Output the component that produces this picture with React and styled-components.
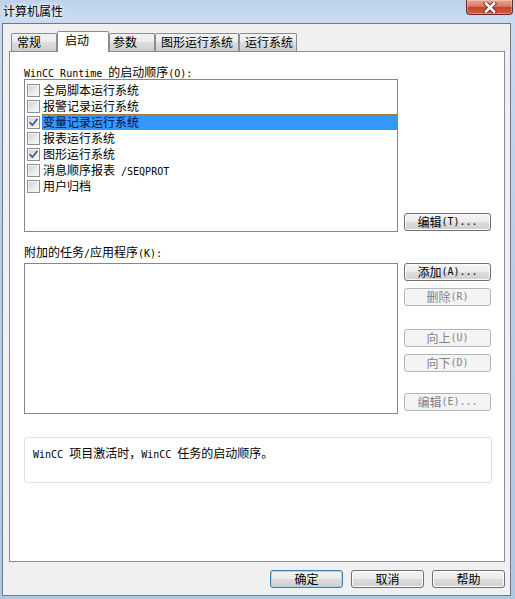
import React from 'react';
import styled, { createGlobalStyle } from 'styled-components';

const Global = createGlobalStyle`
  html, body { margin: 0; padding: 0; }
  body {
    width: 515px; height: 599px; overflow: hidden;
    font-family: "Noto Sans CJK SC", "Noto Sans", sans-serif;
    font-size: 12px; color: #000;
  }
  * { box-sizing: border-box; }
`;

const Window = styled.div`
  width: 515px; height: 599px;
  display: flex; flex-direction: column;
  background: linear-gradient(180deg, #bcd2eb 0%, #c8dbf0 3%, #b9cfe9 40%, #aec8e6 100%);
`;

const TitleBar = styled.div`
  flex: none; height: 23px;
  display: flex; justify-content: space-between; align-items: flex-start;
  padding: 0 2px 0 3px;
`;

const Title = styled.div`
  padding-top: 4px; line-height: 13px; font-size: 12px; color: #000;
  text-shadow: 0 0 6px #fff, 0 0 3px #fff;
`;

const CloseBtn = styled.div`
  width: 47px; height: 15px;
  border: 1px solid #6b2a22; border-top: none;
  border-radius: 0 0 4px 4px;
  background: linear-gradient(180deg, #e9a592 0%, #dc7a63 45%, #c5432c 52%, #d0603f 100%);
  box-shadow: inset 0 0 0 1px rgba(255, 255, 255, 0.3);
  display: flex; align-items: center; justify-content: center;
`;

const Body = styled.div`
  flex: 1;
  margin: 0 4px 3px 2px;
  border: 1px solid #6e7a88;
  background: #f0f0f0;
  padding: 7px 5px 7px 6px;
  display: flex; flex-direction: column;
`;

const TabRow = styled.div`
  flex: none; height: 20px;
  display: flex; align-items: flex-end;
  padding-left: 2px;
`;

const Tab = styled.div`
  position: relative;
  flex: none;
  width: ${p => p.$w}px;
  height: ${p => (p.$active ? 21 : 18)}px;
  margin-bottom: ${p => (p.$active ? -1 : 0)}px;
  z-index: ${p => (p.$active ? 1 : 0)};
  border: 1px solid #898c95;
  border-bottom: none;
  border-radius: 2px 2px 0 0;
  background: ${p => (p.$active ? '#fff' : 'linear-gradient(180deg, #f3f3f3 0%, #ebebeb 50%, #dddddd 50%, #cfcfcf 100%)')};
  padding-left: ${p => p.$pl}px;
  line-height: 16px;
  white-space: nowrap;
`;

const Panel = styled.div`
  flex: 1;
  border: 1px solid #898c95;
  background: #fff;
  padding: 12px 11px 0 14px;
  display: flex; flex-direction: column;
`;

const Label = styled.div`
  line-height: 15px; height: 15px;
  margin-top: ${p => p.$mt || 0}px;
  margin-bottom: ${p => p.$mb || 0}px;
  white-space: nowrap;
`;

const Row = styled.div`
  display: flex; gap: 6px;
`;

const ListBox = styled.div`
  flex: none;
  width: 374px; height: ${p => p.$h}px;
  border: 1px solid #828790;
  background: #fff;
  padding: 2px 0 0 2px;
  display: flex; flex-direction: column;
`;

const Item = styled.div`
  display: flex; align-items: flex-start; height: 16px;
`;

const Check = styled.span`
  flex: none;
  width: 13px; height: 13px; margin-top: 2px;
  border: 1px solid #8e8f8f;
  background: linear-gradient(135deg, #cfd2d7 0%, #e6e7e9 50%, #f8f8f8 100%);
  box-shadow: inset 0 0 0 1px #f6f6f6;
  display: flex; align-items: center; justify-content: center;
`;

const ItemText = styled.span`
  flex: 1;
  margin-left: 2px;
  height: 16px; line-height: 14px;
  border: 1px ${p => (p.$sel ? 'dotted #b5742f' : 'solid transparent')};
  background: ${p => (p.$sel ? '#3399ff' : 'transparent')};
  color: ${p => (p.$sel ? '#0a0a3a' : '#000')};
  white-space: nowrap;
`;

const BtnCol = styled.div`
  display: flex; flex-direction: column;
  justify-content: ${p => (p.$end ? 'flex-end' : 'flex-start')};
  padding-bottom: ${p => (p.$end ? 1 : 0)}px;
`;

const Btn = styled.div`
  flex: none;
  width: ${p => p.$w}px; height: 18px;
  margin-top: ${p => p.$mt || 0}px;
  border-radius: 3px;
  border: 1px solid ${p => (p.$disabled ? '#b3b6b9' : p.$default ? '#3c7fb1' : '#707070')};
  background: ${p => (p.$disabled
    ? '#f4f4f4'
    : 'linear-gradient(180deg, #f4f4f4 0%, #ececec 50%, #dddddd 50%, #d0d0d0 100%)')};
  box-shadow: ${p => (p.$default ? 'inset 0 0 0 1px #a5d6f3' : p.$disabled ? 'none' : 'inset 0 0 0 1px #fbfbfb')};
  color: ${p => (p.$disabled ? '#838383' : '#000')};
  display: flex; align-items: center; justify-content: center;
  line-height: 14px; white-space: nowrap;
`;

const Desc = styled.div`
  margin-top: 23px;
  width: 468px; height: 46px;
  border: 1px solid #d9e2e9;
  border-radius: 3px;
  padding: 8px 8px 0 8px;
  line-height: 14px;
  white-space: nowrap;
`;

const Footer = styled.div`
  flex: none;
  margin-top: 8px;
  display: flex; justify-content: flex-end; gap: 8px;
`;

const Lat = styled.span`
  font-family: "DejaVu Sans Mono", "Liberation Mono", monospace;
  font-size: 10px;
`;

const Mixed = ({ text }) =>
  text
    .split(/([\x20-\x7e]+)/)
    .filter(Boolean)
    .map((s, i) =>
      /^[\x20-\x7e]+$/.test(s) ? <Lat key={i}>{s}</Lat> : <React.Fragment key={i}>{s}</React.Fragment>
    );

const CheckMark = () => (
  <svg width="11" height="11" viewBox="0 0 11 11">
    <path d="M2 5.6 L4.4 8.2 L9 2.4" fill="none" stroke="#4a5e8c" strokeWidth="1.7" strokeLinecap="round" strokeLinejoin="round" />
  </svg>
);

const CloseIcon = () => (
  <svg width="14" height="11" viewBox="0 0 14 11">
    <path d="M3 1.5 L11 9.5 M11 1.5 L3 9.5" stroke="#5a2a24" strokeWidth="4.4" strokeLinecap="square" />
    <path d="M3 1.5 L11 9.5 M11 1.5 L3 9.5" stroke="#fff" strokeWidth="2.6" strokeLinecap="square" />
  </svg>
);

const tabs = [
  { label: '常规', w: 46, pl: 5 },
  { label: '启动', w: 52, pl: 7, active: true },
  { label: '参数', w: 46, pl: 3 },
  { label: '图形运行系统', w: 84, pl: 5 },
  { label: '运行系统', w: 58, pl: 5 },
];

const items = [
  { label: '全局脚本运行系统', checked: false },
  { label: '报警记录运行系统', checked: false },
  { label: '变量记录运行系统', checked: true, sel: true },
  { label: '报表运行系统', checked: false },
  { label: '图形运行系统', checked: true },
  { label: '消息顺序报表 /SEQPROT', checked: false },
  { label: '用户归档', checked: false },
];

export default function App() {
  return (
    <>
      <Global />
      <Window>
        <TitleBar>
          <Title>计算机属性</Title>
          <CloseBtn><CloseIcon /></CloseBtn>
        </TitleBar>
        <Body>
          <TabRow>
            {tabs.map(t => (
              <Tab key={t.label} $w={t.w} $pl={t.pl} $active={t.active}>{t.label}</Tab>
            ))}
          </TabRow>
          <Panel>
            <Label><Mixed text="WinCC Runtime 的启动顺序(O):" /></Label>
            <Row>
              <ListBox $h={153}>
                {items.map(it => (
                  <Item key={it.label}>
                    <Check>{it.checked && <CheckMark />}</Check>
                    <ItemText $sel={it.sel}><Mixed text={it.label} /></ItemText>
                  </Item>
                ))}
              </ListBox>
              <BtnCol $end>
                <Btn $w={87}><Mixed text="编辑(T)..." /></Btn>
              </BtnCol>
            </Row>
            <Label $mt={12} $mb={4}><Mixed text="附加的任务/应用程序(K):" /></Label>
            <Row>
              <ListBox $h={151} />
              <BtnCol>
                <Btn $w={87}><Mixed text="添加(A)..." /></Btn>
                <Btn $w={87} $mt={7} $disabled><Mixed text="删除(R)" /></Btn>
                <Btn $w={87} $mt={23} $disabled><Mixed text="向上(U)" /></Btn>
                <Btn $w={87} $mt={7} $disabled><Mixed text="向下(D)" /></Btn>
                <Btn $w={87} $mt={21} $disabled><Mixed text="编辑(E)..." /></Btn>
              </BtnCol>
            </Row>
            <Desc><Mixed text="WinCC 项目激活时，WinCC 任务的启动顺序。" /></Desc>
          </Panel>
          <Footer>
            <Btn $w={73} $default>确定</Btn>
            <Btn $w={73}>取消</Btn>
            <Btn $w={73}>帮助</Btn>
          </Footer>
        </Body>
      </Window>
    </>
  );
}
